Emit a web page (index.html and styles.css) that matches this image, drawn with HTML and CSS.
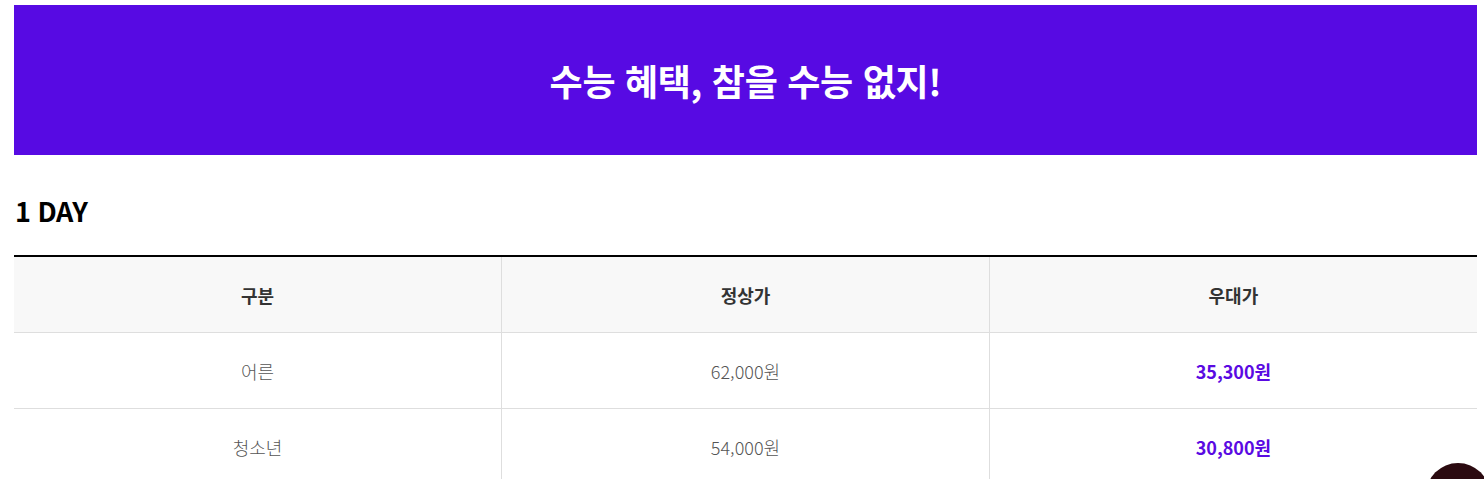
FILE: index.html
```html
<!DOCTYPE html>
<html lang="ko">
<head>
<meta charset="utf-8">
<link rel="stylesheet" href="styles.css">
</head>
<body>
<div class="page">
  <div class="banner"><h1 class="banner-title">수능 혜택, 참을 수능 없지!</h1></div>
  <h2 class="section-title">1 DAY</h2>
  <table class="price-table">
    <thead>
      <tr><th>구분</th><th>정상가</th><th>우대가</th></tr>
    </thead>
    <tbody>
      <tr><td>어른</td><td>62,000원</td><td class="sale">35,300원</td></tr>
      <tr><td>청소년</td><td>54,000원</td><td class="sale">30,800원</td></tr>
    </tbody>
  </table>
</div>
<div class="float-btn"></div>
</body>
</html>
```
FILE: styles.css
```css
html, body { margin: 0; padding: 0; background: #fff; }
body { font-family: "Noto Sans CJK KR", "Noto Sans", sans-serif; overflow: hidden; }
.page { margin: 5px 7px 0 14px; }
.banner {
  height: 150px;
  background: #570ae3;
  display: flex;
  align-items: center;
  justify-content: center;
}
.banner-title {
  margin: 0;
  color: #fff;
  font-size: 36px;
  font-weight: 700;
  letter-spacing: -0.3px;
  line-height: 1;
}
.section-title {
  margin: 38px 0 0 1px;
  font-size: 27px;
  font-weight: 700;
  color: #000;
  letter-spacing: -0.5px;
  line-height: 36px;
}
.price-table {
  margin-top: 26px;
  width: 100%;
  border-collapse: collapse;
  table-layout: fixed;
  border-top: 2px solid #000;
}
.price-table th, .price-table td {
  text-align: center;
  font-size: 18px;
  border-bottom: 1px solid #dedede;
  border-left: 1px solid #dedede;
  padding: 0;
}
.price-table th:first-child, .price-table td:first-child { border-left: none; }
.price-table th {
  height: 75px;
  background: #f8f8f8;
  font-weight: 700;
  color: #333;
}
.price-table td {
  height: 75px;
  font-weight: 300;
  color: #555;
}
.price-table td.sale { color: #5a0ae2; font-weight: 700; }
.float-btn {
  position: fixed;
  left: 1426px;
  top: 463px;
  width: 64px;
  height: 64px;
  border-radius: 50%;
  background: #2b0a10;
}
```
